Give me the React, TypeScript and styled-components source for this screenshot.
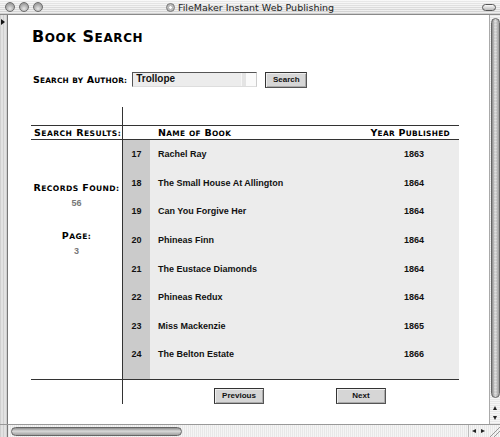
import React from 'react';
import styled, { createGlobalStyle } from 'styled-components';

const Global = createGlobalStyle`
  html, body { margin: 0; padding: 0; background: #fff; }
  body { font-family: "Liberation Sans", Arial, Helvetica, sans-serif; }
  * { box-sizing: border-box; }
`;

const Window = styled.div`
  width: 500px;
  height: 437px;
  display: flex;
  flex-direction: column;
  overflow: hidden;
  background: #ddd;
`;

const TitleBar = styled.div`
  height: 15px;
  flex: none;
  display: flex;
  align-items: center;
  position: relative;
  padding: 0 4px 0 5px;
  border-bottom: 1px solid #8a8a8a;
  background:
    repeating-linear-gradient(to bottom, rgba(255,255,255,0.55) 0 1px, rgba(0,0,0,0.03) 1px 2px),
    linear-gradient(to bottom, #f2f2f2, #d6d6d6);
`;

const Lights = styled.div`
  display: flex;
  gap: 4px;
`;

const Light = styled.span`
  width: 10px;
  height: 10px;
  border-radius: 50%;
  border: 1px solid #6e6e6e;
  background: radial-gradient(circle at 50% 70%, #e6e6e6 0%, #a9a9a9 60%, #8a8a8a 100%);
`;

const Title = styled.div`
  position: absolute;
  left: 0;
  right: 0;
  top: 0;
  height: 14px;
  display: flex;
  align-items: center;
  justify-content: center;
  gap: 3px;
  font-family: "DejaVu Sans", "Liberation Sans", sans-serif;
  font-size: 9.5px;
  color: #222;
  pointer-events: none;
`;

const TitleIcon = styled.span`
  width: 9px;
  height: 9px;
  border-radius: 50%;
  border: 1px solid #777;
  background: radial-gradient(circle, #fff 0 25%, #bbb 30% 100%);
`;

const Pill = styled.span`
  margin-left: auto;
  width: 14px;
  height: 7px;
  border-radius: 4px;
  border: 1px solid #555;
  background: linear-gradient(#fafafa, #bbb);
`;

const Main = styled.div`
  flex: 1;
  display: flex;
  min-height: 0;
`;

const LeftEdge = styled.div`
  width: 8px;
  flex: none;
  position: relative;
  border-right: 1px solid #777;
  background: repeating-linear-gradient(to right, #cfcfcf 0 1px, #e2e2e2 1px 3px);
`;

const Arrow = styled.span`
  position: absolute;
  top: 4px;
  left: 1px;
  width: 0;
  height: 0;
  border-top: 3px solid transparent;
  border-bottom: 3px solid transparent;
  border-left: 4px solid #111;
`;

const Content = styled.div`
  flex: 1;
  background: #fff;
  padding: 13px 0 0 23px;
  overflow: hidden;
`;

const VScroll = styled.div`
  width: 11px;
  flex: none;
  display: flex;
  flex-direction: column;
  align-items: center;
  padding-top: 3px;
  border-left: 1px solid #aaa;
  background: repeating-linear-gradient(to bottom, #e8e8e8 0 1px, #f6f6f6 1px 2px);
`;

const VThumb = styled.div`
  width: 9px;
  height: 380px;
  border-radius: 5px;
  border: 1px solid #666;
  background: linear-gradient(to right, #8d8d8d, #d9d9d9 45%, #a0a0a0);
  position: relative;
  &::after {
    content: "";
    position: absolute;
    inset: 2px 2px;
    background: repeating-linear-gradient(to bottom, rgba(255,255,255,0.25) 0 1px, transparent 1px 3px);
  }
`;

const ScrollArrow = styled.span<{ $dir: 'up' | 'down' | 'left' | 'right' }>`
  width: 0;
  height: 0;
  ${({ $dir }) =>
    $dir === 'up'
      ? 'border-left:2.5px solid transparent;border-right:2.5px solid transparent;border-bottom:4px solid #222;'
      : $dir === 'down'
      ? 'border-left:2.5px solid transparent;border-right:2.5px solid transparent;border-top:4px solid #222;'
      : $dir === 'left'
      ? 'border-top:2.5px solid transparent;border-bottom:2.5px solid transparent;border-right:4px solid #222;'
      : 'border-top:2.5px solid transparent;border-bottom:2.5px solid transparent;border-left:4px solid #222;'}
`;

const VArrows = styled.div`
  margin-top: auto;
  margin-bottom: 4px;
  display: flex;
  flex-direction: column;
  align-items: center;
  gap: 6px;
`;

const BottomBar = styled.div`
  height: 13px;
  flex: none;
  display: flex;
  align-items: center;
  border-top: 1px solid #999;
  background: repeating-linear-gradient(to right, #e8e8e8 0 1px, #f5f5f5 1px 2px);
`;

const BottomEdge = styled.div`
  width: 8px;
  align-self: stretch;
  border-right: 1px solid #777;
  background: repeating-linear-gradient(to right, #cfcfcf 0 1px, #e2e2e2 1px 3px);
`;

const HTrack = styled.div`
  flex: 1;
  padding-left: 3px;
  display: flex;
  align-items: center;
`;

const HThumb = styled.div`
  width: 171px;
  height: 9px;
  border-radius: 5px;
  border: 1px solid #666;
  background: linear-gradient(to bottom, #8d8d8d, #d9d9d9 45%, #a0a0a0);
`;

const HArrows = styled.div`
  width: 20px;
  display: flex;
  align-items: center;
  justify-content: center;
  gap: 5px;
  border-left: 1px solid #bbb;
  align-self: stretch;
`;

const Grip = styled.div`
  width: 12px;
  align-self: stretch;
  background: linear-gradient(135deg, transparent 55%, #999 55% 60%, transparent 60% 72%, #999 72% 77%, transparent 77%);
`;

/* ---------- small caps (Copperplate-like) ---------- */

const CapsText = styled.span<{ $big: number; $small: number; $ls?: number }>`
  font-family: "DejaVu Sans", "Liberation Sans", sans-serif;
  font-weight: bold;
  color: #000;
  white-space: nowrap;
  letter-spacing: ${({ $ls }) => $ls ?? 0}px;
  font-size: ${({ $big }) => $big}px;
  line-height: 1;
  & > .s {
    font-size: ${({ $small }) => $small}px;
    text-transform: uppercase;
  }
`;

function SmallCaps({ text, big, small, ls }: { text: string; big: number; small: number; ls?: number }) {
  const parts: React.ReactNode[] = [];
  text.split(' ').forEach((word, i) => {
    if (i > 0) parts.push(' ');
    const first = word[0];
    const isUpper = first === first.toUpperCase() && first !== first.toLowerCase();
    if (isUpper) {
      parts.push(first);
      if (word.length > 1) parts.push(<span className="s" key={i}>{word.slice(1)}</span>);
    } else {
      parts.push(<span className="s" key={i}>{word}</span>);
    }
  });
  return (
    <CapsText $big={big} $small={small} $ls={ls}>
      {parts}
    </CapsText>
  );
}

/* ---------- page ---------- */

const Heading = styled.h1`
  margin: 0 0 0 1px;
  height: 18px;
  display: flex;
  align-items: center;
  font-size: 15px;
`;

const SearchRow = styled.div`
  display: flex;
  align-items: center;
  margin: 25px 0 0 2px;
  height: 17px;
`;

const TextBox = styled.div`
  margin-left: 5px;
  width: 125px;
  height: 15px;
  padding: 0 3px;
  border-top: 1px solid #555;
  border-left: 1px solid #555;
  border-right: 1px solid #ccc;
  border-bottom: 1px solid #ddd;
  background: linear-gradient(to right, #ececec 0 88%, #f6f6f6 88% 89%, #e4e4e4 89% 92%, #fafafa 92%);
  font-size: 10px;
  font-weight: bold;
  line-height: 12px;
  color: #111;
`;

const Button = styled.div<{ $w: number }>`
  width: ${({ $w }) => $w}px;
  height: 16px;
  display: flex;
  align-items: center;
  justify-content: center;
  border: 1px solid #333;
  border-right-color: #555;
  border-bottom-color: #555;
  box-shadow: inset 1px 1px 0 #eee, inset -1px -1px 0 #aaa;
  background: #d6d6d6;
  font-size: 8px;
  font-weight: bold;
  color: #111;
`;

const SearchButton = styled(Button)`
  margin-left: 8px;
`;

const Grid = styled.div`
  margin-top: 19px;
  width: 428px;
  display: grid;
  grid-template-columns: 92px 27px 1fr 89px;
  grid-template-rows: 18px 15px repeat(8, 28.6px) 10px 25px;
`;

const LeftCell = styled.div`
  grid-column: 1;
  border-right: 1px solid #333;
`;

const TopSpacer = styled.div`
  grid-column: 2 / span 3;
`;

const HeadCell = styled.div<{ $align?: string; $pad?: number }>`
  border-top: 1px solid #333;
  border-bottom: 1px solid #333;
  display: flex;
  align-items: center;
  justify-content: ${({ $align }) => $align || 'flex-start'};
  padding-left: ${({ $pad }) => $pad ?? 0}px;
  padding-right: ${({ $align }) => ($align === 'flex-end' ? '9px' : '0')};
`;

const HeadLeft = styled(HeadCell)`
  border-right: 1px solid #333;
`;

const HeadName = styled(HeadCell)`
  grid-column: 2 / span 2;
`;

const SideInfo = styled.div`
  grid-column: 1;
  grid-row: 3 / span 9;
  border-right: 1px solid #333;
  display: flex;
  flex-direction: column;
  align-items: center;
  padding-top: 42px;
`;

const InfoLabel = styled.div`
  height: 12px;
  display: flex;
  align-items: center;
`;

const InfoValue = styled.div<{ $after: number }>`
  margin-top: 3px;
  margin-bottom: ${({ $after }) => $after}px;
  font-size: 9px;
  font-weight: bold;
  color: #777;
  line-height: 12px;
`;

const NumCell = styled.div`
  grid-column: 2;
  background: #cbcbcb;
  display: flex;
  align-items: center;
  justify-content: center;
  font-size: 9px;
  font-weight: bold;
  color: #111;
`;

const NameCell = styled.div`
  grid-column: 3;
  background: #ececec;
  display: flex;
  align-items: center;
  padding-left: 8px;
  font-size: 9px;
  font-weight: bold;
  color: #111;
  white-space: nowrap;
`;

const YearCell = styled(NameCell)`
  grid-column: 4;
  padding-left: 34px;
`;

const FillNum = styled.div`
  grid-column: 2;
  background: #cbcbcb;
`;

const FillRest = styled.div`
  grid-column: 3 / span 2;
  background: #ececec;
`;

const FootLeft = styled.div`
  grid-column: 1;
  border-top: 1px solid #333;
  border-right: 1px solid #333;
`;

const Footer = styled.div`
  grid-column: 2 / span 3;
  border-top: 1px solid #333;
  display: flex;
  align-items: flex-start;
  padding: 8px 0 0 91px;
  gap: 72px;
`;

const books: [number, string, number][] = [
  [17, 'Rachel Ray', 1863],
  [18, 'The Small House At Allington', 1864],
  [19, 'Can You Forgive Her', 1864],
  [20, 'Phineas Finn', 1864],
  [21, 'The Eustace Diamonds', 1864],
  [22, 'Phineas Redux', 1864],
  [23, 'Miss Mackenzie', 1865],
  [24, 'The Belton Estate', 1866],
];

export default function App() {
  return (
    <>
      <Global />
      <Window>
        <TitleBar>
          <Lights>
            <Light />
            <Light />
            <Light />
          </Lights>
          <Title>
            <TitleIcon />
            FileMaker Instant Web Publishing
          </Title>
          <Pill />
        </TitleBar>
        <Main>
          <LeftEdge>
            <Arrow />
          </LeftEdge>
          <Content>
            <Heading>
              <SmallCaps text="Book Search" big={16} small={12} ls={0.6} />
            </Heading>
            <SearchRow>
              <SmallCaps text="Search by Author:" big={9.5} small={7.4} ls={0.15} />
              <TextBox>Trollope</TextBox>
              <SearchButton $w={42}>Search</SearchButton>
            </SearchRow>
            <Grid>
              <LeftCell />
              <TopSpacer />
              <HeadLeft $pad={3}>
                <SmallCaps text="Search Results:" big={9.5} small={7.6} ls={0.45} />
              </HeadLeft>
              <HeadName $pad={35}>
                <SmallCaps text="Name of Book" big={9.5} small={7.4} ls={0.3} />
              </HeadName>
              <HeadCell $align="flex-end">
                <SmallCaps text="Year Published" big={9.5} small={7.4} ls={0.3} />
              </HeadCell>
              <SideInfo>
                <InfoLabel>
                  <SmallCaps text="Records Found:" big={9.5} small={7.6} ls={0.4} />
                </InfoLabel>
                <InfoValue $after={21}>56</InfoValue>
                <InfoLabel>
                  <SmallCaps text="Page:" big={9.5} small={7.6} ls={0.4} />
                </InfoLabel>
                <InfoValue $after={0}>3</InfoValue>
              </SideInfo>
              {books.map(([n, name, year]) => (
                <React.Fragment key={n}>
                  <NumCell>{n}</NumCell>
                  <NameCell>{name}</NameCell>
                  <YearCell>{year}</YearCell>
                </React.Fragment>
              ))}
              <FillNum />
              <FillRest />
              <FootLeft />
              <Footer>
                <Button $w={50}>Previous</Button>
                <Button $w={50}>Next</Button>
              </Footer>
            </Grid>
          </Content>
          <VScroll>
            <VThumb />
            <VArrows>
              <ScrollArrow $dir="up" />
              <ScrollArrow $dir="down" />
            </VArrows>
          </VScroll>
        </Main>
        <BottomBar>
          <BottomEdge />
          <HTrack>
            <HThumb />
          </HTrack>
          <HArrows>
            <ScrollArrow $dir="left" />
            <ScrollArrow $dir="right" />
          </HArrows>
          <Grip />
        </BottomBar>
      </Window>
    </>
  );
}
